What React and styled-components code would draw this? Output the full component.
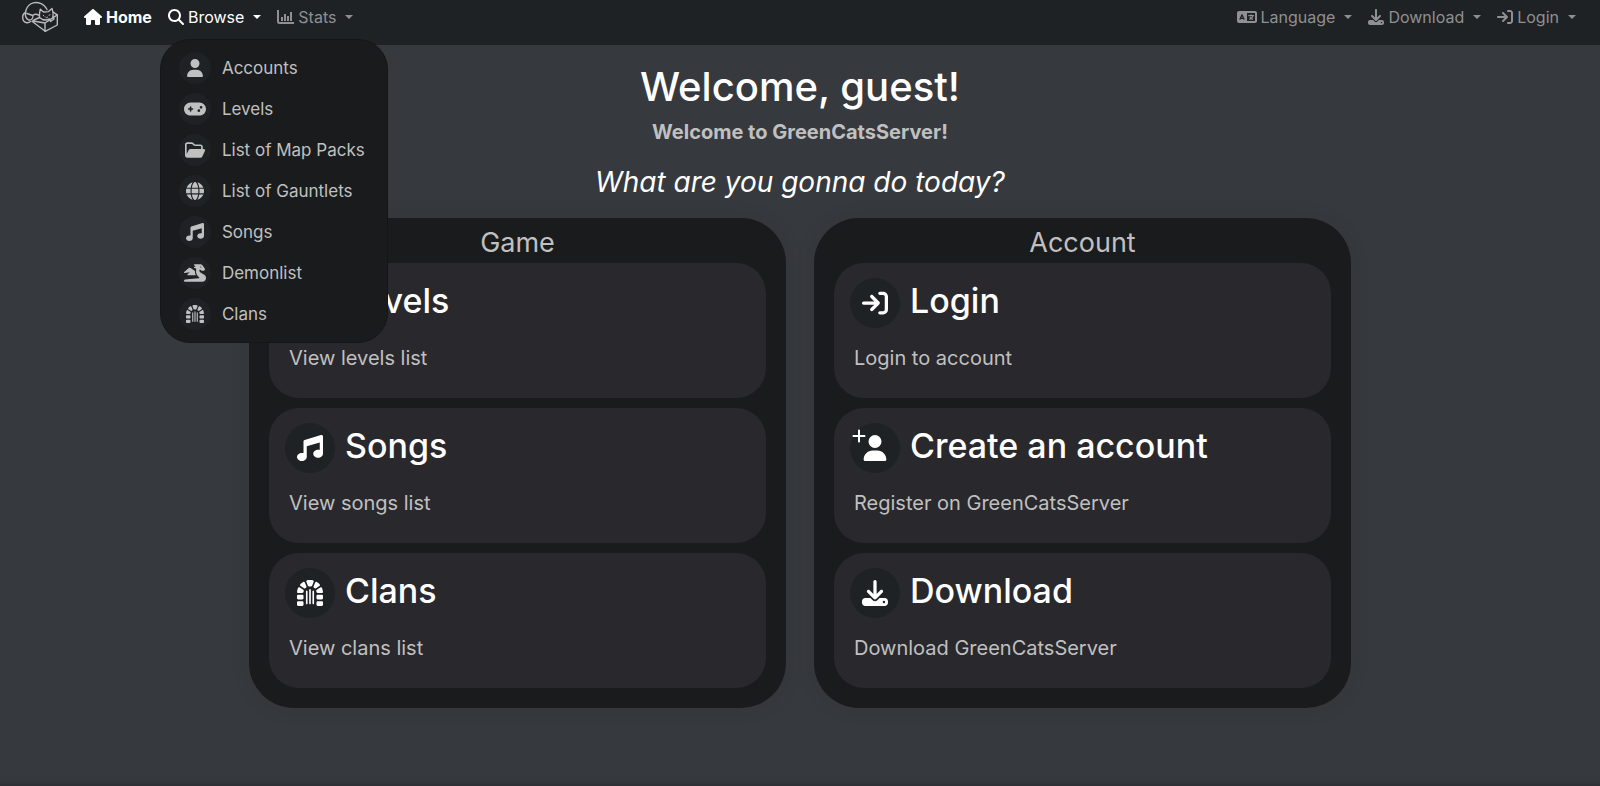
import React, { useState } from "react";
import styled, { createGlobalStyle, css } from "styled-components";
import {
  FaHouse,
  FaMagnifyingGlass,
  FaLanguage,
  FaDownload,
  FaArrowRightToBracket,
  FaUser,
  FaGamepad,
  FaGlobe,
  FaMusic,
  FaDragon,
  FaDungeon,
  FaPlus,
} from "react-icons/fa6";

const color = {
  page: "#36393e",
  bar: "#1e2225",
  panel: "#1a1b1c",
  card: "#29282d",
  text: "#c0c0c0",
  muted: "#8f9091",
};

const GlobalStyle = createGlobalStyle`
  * { box-sizing: border-box; }
  body {
    margin: 0;
    min-height: 100vh;
    background: ${color.page};
    box-shadow: inset 0 -8px 8px -8px rgba(0, 0, 0, 0.3);
    color: ${color.text};
    font: 400 16px/24px Inter, "Liberation Sans", sans-serif;
  }
  h1, h2, h3, p, ul { margin: 0; padding: 0; }
  ul { list-style: none; }
`;

const Navbar = styled.nav`
  display: flex;
  align-items: flex-start;
  height: 45px;
  padding: 0 16px 0 22px;
  background: ${color.bar};
`;

const Brand = styled.a`
  display: flex;
  margin: 2px 18px 0 0;
  svg { width: 36px; height: 30px; overflow: visible; }
`;

const NavGroup = styled.ul`
  display: flex;
  padding-top: 5px;
`;

const NavItem = styled.li`
  position: relative;
`;

const navEntry = css`
  display: flex;
  align-items: center;
  gap: 4px;
  height: 24px;
  padding: 0 8px;
  border: 0;
  background: none;
  font: inherit;
  font-weight: ${(p) => (p.$bold ? 700 : 400)};
  color: ${(p) => (p.$active ? "#fff" : color.muted)};
  text-decoration: none;
  cursor: pointer;
`;

const NavLink = styled.a`
  ${navEntry}
`;

const NavToggle = styled.button`
  ${navEntry}
  &::after {
    content: "";
    margin-left: 5px;
    border: 4px solid transparent;
    border-top-color: currentColor;
    border-bottom: 0;
  }
`;

const Spacer = styled.div`
  flex: 1;
`;

const Menu = styled.ul`
  position: absolute;
  top: 34px;
  left: 0;
  z-index: 10;
  padding: 7px 0 8px;
  border: 1px solid #151617;
  border-radius: 30px;
  background: ${color.panel};
`;

const MenuLink = styled.a`
  display: flex;
  align-items: center;
  gap: 11px;
  height: 41px;
  padding: 0 22px 0 18px;
  color: ${color.text};
  font-size: 17px;
  text-decoration: none;
  white-space: nowrap;
`;

const IconDisc = styled.span`
  position: relative;
  display: flex;
  flex: none;
  align-items: center;
  justify-content: center;
  width: ${(p) => p.$size}px;
  height: ${(p) => p.$size}px;
  border-radius: 50%;
  background: ${color.bar};
  font-size: ${(p) => p.$glyph}px;
`;

const PlusBadge = styled(FaPlus)`
  position: absolute;
  top: 5px;
  left: 1px;
  font-size: 16px;
`;

const Main = styled.main`
  display: flex;
  flex-direction: column;
  align-items: center;
  padding: 16px 24px 24px;
  text-align: center;
`;

const Welcome = styled.h1`
  color: #fff;
  font-size: 40px;
  font-weight: 500;
  line-height: 52px;
`;

const Lead = styled.p`
  margin-top: 4px;
  font-size: 20px;
  font-weight: 700;
  line-height: 30px;
`;

const Question = styled.p`
  margin: 13px 0;
  color: #fff;
  font-size: 28px;
  font-style: italic;
  line-height: 45px;
`;

const Panels = styled.div`
  display: grid;
  grid-template-columns: 1fr 1fr;
  gap: 28px;
  width: 100%;
  max-width: 1102px;
`;

const Panel = styled.section`
  display: flex;
  flex-direction: column;
  gap: 10px;
  padding: 0 20px 20px;
  border-radius: 45px;
  background: ${color.panel};
  box-shadow: 0 0 20px rgba(26, 27, 28, 0.1);
`;

const PanelTitle = styled.h2`
  margin-bottom: -10px;
  padding-top: 5px;
  font-size: 27px;
  font-weight: 400;
  line-height: 40px;
`;

const Card = styled.a`
  display: block;
  height: 135px;
  padding: 15px 16px;
  border-radius: 30px;
  background: ${color.card};
  color: ${color.text};
  text-align: left;
  text-decoration: none;
`;

const CardHead = styled.div`
  display: flex;
  gap: 10px;
  color: #fff;
`;

const CardTitle = styled.h3`
  font-size: 34px;
  font-weight: 500;
  line-height: 45px;
`;

const CardText = styled.p`
  padding: 15px 4px 0;
  font-size: 20px;
  line-height: 30px;
`;

function CatLogo() {
  return (
    <svg viewBox="0 0 36 30" fill="none" stroke="#b9bbbb" strokeWidth="1.4" strokeLinejoin="round" strokeLinecap="round" aria-hidden="true">
      <path d="M3.500 10.500C4 7 5.500 4 8.500 2C11.500 0.200 15.500 0.200 18.500 1.300C21.500 2.400 23.500 4.500 25 7.500" />
      <path d="M3.500 10.500C1.200 11.500 0.600 13.500 0.700 15.500C0.800 18 2 20 4 20.500C5.500 21 7 20.800 8.500 19.500" />
      <path d="M3.500 10.500C3 13.500 4 16.500 6.500 18C9.500 18.500 11.500 16 10.800 13.500L5 11.500M10.800 13.500C12 11.800 15 11.800 17 13.500" />
      <path d="M10 19.300L23.200 29.300L35.300 23V12.800L31.500 10.300" />
      <path d="M11 19L23 21V29.300M23 21L35.300 12.800M11 18.500L17.500 15.500" />
      <path d="M17.500 15.500C17.200 12.500 17.600 10 18.300 7.300L21.500 10L26.500 9.600L30 6.500C31 9 31.300 12 31 14.800" />
      <path d="M17.500 15.500L20.500 17.500C23 18.300 25.500 18 27.500 17L28.500 19.500L32 17L31 14.800" />
      <path d="M21.200 13.300L22 14M27 13.200L28 12.800M23.700 15.200L24.600 15.800L25.700 15" strokeWidth="1" />
    </svg>
  );
}

function StatsChart() {
  return (
    <svg width="17" height="16" viewBox="0 0 17 16" fill="none" stroke="currentColor" aria-hidden="true">
      <path d="M1 1v11.500q0 1.500 1.500 1.500H17" strokeWidth="2" />
      <path d="M5 8v4M8 5v7M11 7v5M14 3v9" strokeWidth="2" />
    </svg>
  );
}

function FolderOpen() {
  return (
    <svg width="20" height="18" viewBox="0 0 576 512" fill="currentColor" aria-hidden="true">
      <path d="M64 32C29 32 0 61 0 96v320c0 35 29 64 64 64h384c20 0 38-11 48-28l80-178c16-32-6-50-42-50h-22v-64c0-35-29-64-64-64H298c-9 0-17-3-23-9l-31-31c-15-15-35-24-56-24H64zm0 48h124c9 0 16 4 22 10l31 31c15 15 35 23 57 23h150c9 0 16 7 16 16v64H172c-33 0-56 13-70 42L48 374V96c0-9 7-16 16-16z" fillRule="evenodd" />
    </svg>
  );
}

const browseItems = [
  { label: "Accounts", icon: FaUser },
  { label: "Levels", icon: FaGamepad, size: 22 },
  { label: "List of Map Packs", icon: FolderOpen },
  { label: "List of Gauntlets", icon: FaGlobe },
  { label: "Songs", icon: FaMusic },
  { label: "Demonlist", icon: FaDragon, size: 22 },
  { label: "Clans", icon: FaDungeon },
];

const panels = [
  {
    title: "Game",
    cards: [
      { title: "Levels", text: "View levels list", icon: FaGamepad },
      { title: "Songs", text: "View songs list", icon: FaMusic },
      { title: "Clans", text: "View clans list", icon: FaDungeon },
    ],
  },
  {
    title: "Account",
    cards: [
      { title: "Login", text: "Login to account", icon: FaArrowRightToBracket },
      { title: "Create an account", text: "Register on GreenCatsServer", icon: FaUser, plus: true },
      { title: "Download", text: "Download GreenCatsServer", icon: FaDownload },
    ],
  },
];

export default function App() {
  const [open, setOpen] = useState(true);
  return (
    <>
      <GlobalStyle />
      <Navbar>
        <Brand href="#" aria-label="GreenCatsServer">
          <CatLogo />
        </Brand>
        <NavGroup>
          <NavItem>
            <NavLink href="#" $active $bold>
              <FaHouse size={18} />
              Home
            </NavLink>
          </NavItem>
          <NavItem>
            <NavToggle type="button" $active aria-expanded={open} onClick={() => setOpen(!open)}>
              <FaMagnifyingGlass />
              Browse
            </NavToggle>
            {open && (
              <Menu>
                {browseItems.map(({ label, icon: Icon, size }) => (
                  <li key={label}>
                    <MenuLink href="#">
                      <IconDisc $size={32} $glyph={18}>
                        <Icon size={size} />
                      </IconDisc>
                      {label}
                    </MenuLink>
                  </li>
                ))}
              </Menu>
            )}
          </NavItem>
          <NavItem>
            <NavToggle type="button">
              <StatsChart />
              Stats
            </NavToggle>
          </NavItem>
        </NavGroup>
        <Spacer />
        <NavGroup>
          <NavItem>
            <NavToggle type="button">
              <FaLanguage size={20} />
              Language
            </NavToggle>
          </NavItem>
          <NavItem>
            <NavToggle type="button">
              <FaDownload />
              Download
            </NavToggle>
          </NavItem>
          <NavItem>
            <NavToggle type="button">
              <FaArrowRightToBracket />
              Login
            </NavToggle>
          </NavItem>
        </NavGroup>
      </Navbar>
      <Main>
        <Welcome>Welcome, guest!</Welcome>
        <Lead>Welcome to GreenCatsServer!</Lead>
        <Question>What are you gonna do today?</Question>
        <Panels>
          {panels.map((panel) => (
            <Panel key={panel.title}>
              <PanelTitle>{panel.title}</PanelTitle>
              {panel.cards.map(({ title, text, icon: Icon, plus }) => (
                <Card key={title} href="#">
                  <CardHead>
                    <IconDisc $size={50} $glyph={26}>
                      <Icon />
                      {plus && <PlusBadge />}
                    </IconDisc>
                    <CardTitle>{title}</CardTitle>
                  </CardHead>
                  <CardText>{text}</CardText>
                </Card>
              ))}
            </Panel>
          ))}
        </Panels>
      </Main>
    </>
  );
}
